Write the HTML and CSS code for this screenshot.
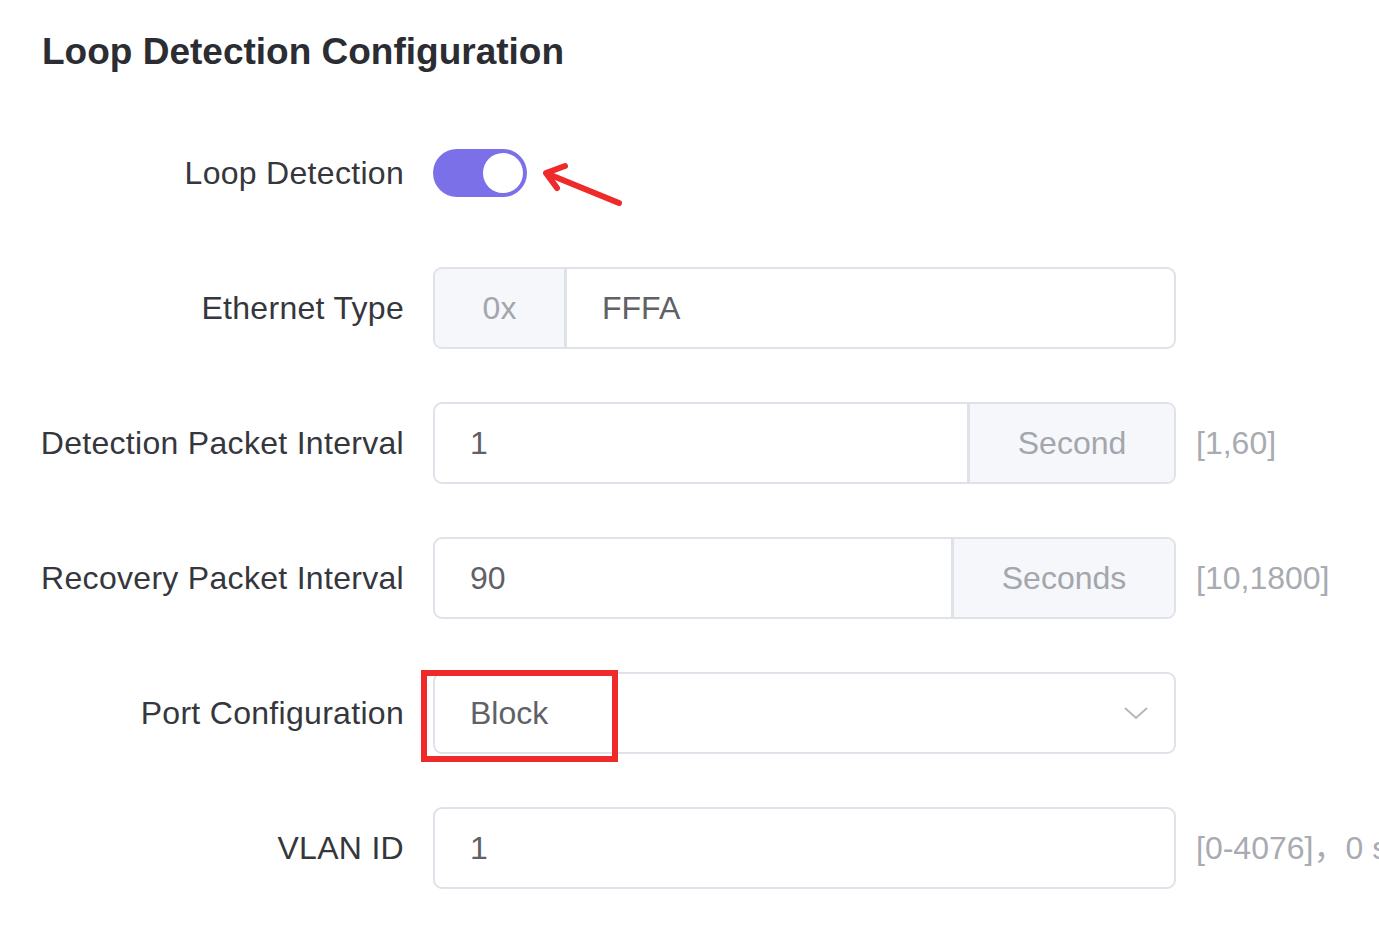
FILE: index.html
```html
<!DOCTYPE html>
<html>
<head>
<meta charset="utf-8">
<link rel="stylesheet" href="styles.css">
</head>
<body>
<div class="page">
  <h1 class="title">Loop Detection Configuration</h1>
  <div class="form">
    <div class="row">
      <div class="label">Loop Detection</div>
      <div class="field toggle-field">
        <span class="switch"><span class="knob"></span></span>
        <svg class="arrow" width="90" height="50" viewBox="0 0 90 50">
          <path d="M84 45 L13 16" stroke="#ee2a2a" stroke-width="6" stroke-linecap="round" fill="none"/>
          <path d="M30 8 L11 15 L22 30" stroke="#ee2a2a" stroke-width="6" stroke-linecap="round" stroke-linejoin="round" fill="none"/>
        </svg>
      </div>
      <div class="hint"></div>
    </div>
    <div class="row">
      <div class="label">Ethernet Type</div>
      <div class="field box">
        <span class="addon prefix">0x</span>
        <span class="value">FFFA</span>
      </div>
      <div class="hint"></div>
    </div>
    <div class="row">
      <div class="label">Detection Packet Interval</div>
      <div class="field box">
        <span class="value">1</span>
        <span class="addon suffix s1">Second</span>
      </div>
      <div class="hint">[1,60]</div>
    </div>
    <div class="row">
      <div class="label">Recovery Packet Interval</div>
      <div class="field box">
        <span class="value">90</span>
        <span class="addon suffix s2">Seconds</span>
      </div>
      <div class="hint">[10,1800]</div>
    </div>
    <div class="row">
      <div class="label">Port Configuration</div>
      <div class="field box select">
        <span class="value">Block</span>
        <svg class="chevron" width="26" height="16" viewBox="0 0 26 16">
          <path d="M2 3 L13 13 L24 3" stroke="#b4b7bd" stroke-width="2" fill="none"/>
        </svg>
        <span class="highlight"></span>
      </div>
      <div class="hint"></div>
    </div>
    <div class="row">
      <div class="label">VLAN ID</div>
      <div class="field box">
        <span class="value">1</span>
      </div>
      <div class="hint">[0-4076]<span class="cjk">，</span>0 stands for untagged</div>
    </div>
  </div>
</div>
</body>
</html>
```
FILE: styles.css
```css
html, body {
  margin: 0;
  padding: 0;
  background: #ffffff;
  overflow: hidden;
}
body {
  width: 1379px;
  height: 926px;
  font-family: "Liberation Sans", Arial, sans-serif;
}
.page {
  padding-top: 30px;
}
.title {
  margin: 0;
  padding-left: 42px;
  font-size: 37px;
  line-height: 44px;
  font-weight: bold;
  color: #2b2d33;
}
.form {
  margin-top: 58px;
  display: flex;
  flex-direction: column;
  gap: 53px;
}
.row {
  display: grid;
  grid-template-columns: 404px 743px 1fr;
  column-gap: 29px;
  height: 82px;
  align-items: center;
}
.row > .hint {
  margin-left: -9px;
}
.label {
  text-align: right;
  font-size: 32px;
  letter-spacing: 0.3px;
  color: #35373c;
  white-space: nowrap;
}
.field {
  height: 82px;
  display: flex;
  align-items: center;
  box-sizing: border-box;
  position: relative;
}
.box {
  border: 2px solid #dfe2e8;
  border-radius: 9px;
}
.value {
  flex: 1;
  padding-left: 35px;
  font-size: 32px;
  color: #5f6167;
}
.addon {
  align-self: stretch;
  display: flex;
  align-items: center;
  justify-content: center;
  background: #f5f7fa;
  font-size: 32px;
  color: #a3a6ad;
}
.prefix {
  width: 129px;
  flex: none;
  border-right: 3px solid #dfe2e8;
  border-radius: 7px 0 0 7px;
}
.suffix {
  flex: none;
  border-left: 3px solid #dfe2e8;
  border-radius: 0 7px 7px 0;
}
.s1 { width: 204px; }
.s2 { width: 220px; }
.hint {
  font-size: 32px;
  color: #a8abb2;
  white-space: nowrap;
}
.cjk {
  font-family: "Noto Sans CJK SC", sans-serif;
  line-height: 0;
}
.toggle-field {
  gap: 8px;
}
.switch {
  width: 94px;
  height: 48px;
  border-radius: 24px;
  background: #7b70e8;
  display: flex;
  align-items: center;
  justify-content: flex-end;
  padding-right: 4px;
  box-sizing: border-box;
}
.knob {
  width: 40px;
  height: 40px;
  border-radius: 50%;
  background: #ffffff;
}
.arrow {
  margin-top: 20px;
}
.chevron {
  margin-right: 25px;
}
.highlight {
  position: absolute;
  left: -14px;
  top: -4px;
  width: 197px;
  height: 92px;
  border: 6px solid #ee2a2a;
  box-sizing: border-box;
}
```
